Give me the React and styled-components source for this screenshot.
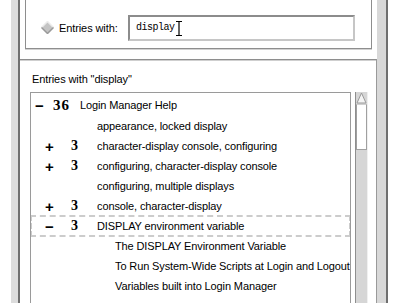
import React from "react";
import styled, { createGlobalStyle } from "styled-components";

const GlobalStyle = createGlobalStyle`
  html, body {
    margin: 0;
    padding: 0;
    background: #ffffff;
    overflow: hidden;
  }
  body {
    font-family: "Liberation Sans", Arial, sans-serif;
    font-size: 11px;
    color: #000;
  }
`;

const Page = styled.div`
  display: flex;
  height: 303px;
  padding-left: 11px;
  overflow: hidden;
`;

const Bar = styled.div`
  flex: 0 0 ${props => props.w}px;
  background: ${props => props.color};
`;

const Content = styled.div`
  flex: 0 0 353px;
  display: flex;
  flex-direction: column;
  background: #fff;
`;

const TopPanel = styled.div`
  height: 59px;
  padding: 0 5px;
  box-sizing: border-box;
`;

const SearchBox = styled.div`
  height: 49px;
  box-sizing: border-box;
  border: 1px solid #8e8e8e;
  border-top: none;
  box-shadow: 0 1px 0 #d2d2d2;
  display: flex;
  align-items: center;
  padding: 14px 16px 7px 15px;
`;

const RadioLabel = styled.label`
  display: flex;
  align-items: center;
  gap: 5px;
  width: 87px;
  letter-spacing: -0.1px;
`;

const Field = styled.div`
  flex: 1;
  height: 26px;
  box-sizing: border-box;
  border: 2px solid #c6c6c6;
  border-top-color: #8c8c8c;
  border-left-color: #8c8c8c;
  display: flex;
  align-items: center;
  padding-left: 6px;
  font-family: "Liberation Mono", "Courier New", monospace;
  font-size: 10px;
  letter-spacing: -0.5px;
`;

const Cursor = styled.svg`
  margin-left: 1px;
  margin-top: 1px;
`;

const LowerPanel = styled.div`
  flex: 1;
  border-top: 1px solid #8e8e8e;
  box-shadow: inset 0 1px 0 #cfcfcf;
  border-right: 1px solid #9a9a9a;
  padding: 12px 8px 0 10px;
  display: flex;
  flex-direction: column;
  min-height: 0;
`;

const Title = styled.div`
  padding-left: 2px;
  line-height: 14px;
  height: 14px;
  margin-bottom: 6px;
  letter-spacing: -0.1px;
`;

const ListArea = styled.div`
  flex: 1;
  display: flex;
  gap: 4px;
  min-height: 0;
`;

const List = styled.div`
  flex: 1;
  border: 1px solid #9a9a9a;
  border-bottom: none;
  padding-top: 1px;
  overflow: hidden;
`;

const Row = styled.div`
  display: flex;
  align-items: center;
  height: ${props => (props.top ? 22 : 20)}px;
  padding-left: ${props => props.pad}px;
  white-space: nowrap;
  letter-spacing: -0.12px;
  outline: ${props => (props.focused ? "2px dashed #cccccc" : "none")};
  outline-offset: -1px;
`;

const Sign = styled.span`
  flex: 0 0 ${props => props.w}px;
  font-weight: bold;
  font-size: 15px;
  line-height: 1;
`;

const Count = styled.span`
  flex: 0 0 ${props => props.w}px;
  font-family: "Liberation Serif", "Times New Roman", serif;
  font-weight: bold;
  font-size: ${props => (props.big ? 15 : 14)}px;
  letter-spacing: ${props => (props.big ? 1 : 0)}px;
`;

const Scrollbar = styled.div`
  flex: 0 0 13px;
  box-sizing: border-box;
  display: flex;
  flex-direction: column;
  background: #d6d6d6;
  border-left: 1px solid #8e8e8e;
  border-right: 1px solid #f0f0f0;
`;

const Arrow = styled.svg`
  display: block;
  flex: 0 0 12px;
`;

const Thumb = styled.div`
  height: 46px;
  box-sizing: border-box;
  background: #fff;
  border: 1px solid #a0a0a0;
  border-top-color: #d0d0d0;
`;

const levels = {
  0: { pad: 4, sign: 18, count: 27 },
  1: { pad: 14, sign: 26, count: 26 },
};

const entries = [
  { level: 0, sign: "−", count: "36", label: "Login Manager Help" },
  { text: 66, label: "appearance, locked display" },
  { level: 1, sign: "+", count: "3", label: "character-display console, configuring" },
  { level: 1, sign: "+", count: "3", label: "configuring, character-display console" },
  { text: 66, label: "configuring, multiple displays" },
  { level: 1, sign: "+", count: "3", label: "console, character-display" },
  { level: 1, sign: "−", count: "3", label: "DISPLAY environment variable", focused: true },
  { text: 84, label: "The DISPLAY Environment Variable" },
  { text: 84, label: "To Run System-Wide Scripts at Login and Logout" },
  { text: 84, label: "Variables built into Login Manager" },
];

const Diamond = () => (
  <svg width="13" height="13" viewBox="0 0 13 13">
    <polygon points="6.5,0.5 12.5,6.5 6.5,12.5 0.5,6.5" fill="#c4c4c4" />
    <polyline points="0.5,6.5 6.5,0.5 12.5,6.5" fill="none" stroke="#ececec" strokeWidth="1.5" />
    <polyline points="0.5,6.5 6.5,12.5 12.5,6.5" fill="none" stroke="#9a9a9a" strokeWidth="1.5" />
  </svg>
);

const Entry = ({ entry }) => {
  if (entry.text !== undefined) {
    return <Row pad={entry.text}>{entry.label}</Row>;
  }
  const lv = levels[entry.level];
  return (
    <Row pad={lv.pad} top={entry.level === 0} focused={entry.focused}>
      <Sign w={lv.sign}>{entry.sign}</Sign>
      <Count w={lv.count} big={entry.level === 0}>
        {entry.count}
      </Count>
      {entry.label}
    </Row>
  );
};

export default function App() {
  return (
    <Page>
      <GlobalStyle />
      <Bar w={7} color="#dcdcdc" />
      <Bar w={2} color="#6f6f6f" />
      <Content>
        <TopPanel>
          <SearchBox>
            <RadioLabel>
              <Diamond />
              Entries with:
            </RadioLabel>
            <Field>
              display
              <Cursor width="6" height="15" viewBox="0 0 6 15">
                <path d="M0 0.5H6M3 0.5V14.5M0 14.5H6" stroke="#000" strokeWidth="1.2" fill="none" />
              </Cursor>
            </Field>
          </SearchBox>
        </TopPanel>
        <LowerPanel>
          <Title>Entries with "display"</Title>
          <ListArea>
            <List>
              {entries.map((e, i) => (
                <Entry key={i} entry={e} />
              ))}
            </List>
            <Scrollbar>
              <Arrow width="11" height="12" viewBox="0 0 11 12">
                <polygon points="5.5,1 10,11 1,11" fill="#f4f4f4" stroke="#9a9a9a" strokeWidth="1" />
              </Arrow>
              <Thumb />
            </Scrollbar>
          </ListArea>
        </LowerPanel>
      </Content>
      <Bar w={9} color="#d8d8d8" />
      <Bar w={2} color="#6f6f6f" />
    </Page>
  );
}
